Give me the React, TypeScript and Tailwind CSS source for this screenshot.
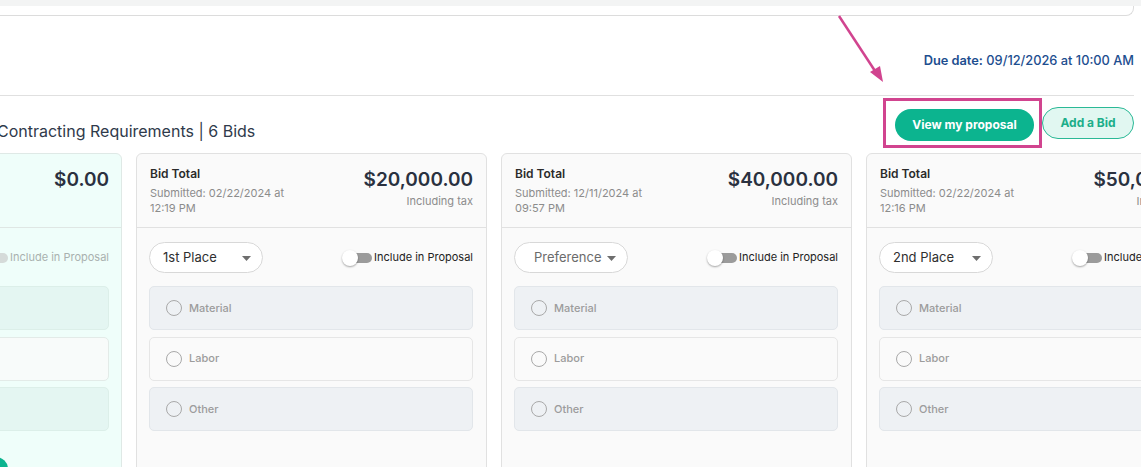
import React from "react";

type Bid = {
  amount: string;
  date: string;
  time: string;
  place: string;
  placeholder?: boolean;
  tax?: boolean;
};

const bids: Bid[] = [
  { amount: "$20,000.00", date: "02/22/2024", time: "12:19 PM", place: "1st Place", tax: true },
  { amount: "$40,000.00", date: "12/11/2024", time: "09:57 PM", place: "Preference", placeholder: true, tax: true },
  { amount: "$50,000.00", date: "02/22/2024", time: "12:16 PM", place: "2nd Place", tax: true },
];

const costTypes = ["Material", "Labor", "Other"];

function Toggle({ muted }: { muted?: boolean }) {
  return (
    <div className="relative w-[30px] h-[16px] shrink-0">
      <div className={`absolute left-[6px] top-[3px] w-[24px] h-[10px] rounded-full ${muted ? "bg-[#d5dbd9]" : "bg-[#9b9b9b]"}`} />
      <div
        className={`absolute left-0 top-0 w-[16px] h-[16px] rounded-full shadow-[0_1px_2px_rgba(0,0,0,0.35)] ${muted ? "bg-[#d8dcdb]" : "bg-white"}`}
      />
    </div>
  );
}

function CostRow({ label, shaded, mint }: { label: string; shaded: boolean; mint?: boolean }) {
  const bg = mint
    ? shaded
      ? "bg-[#e4f6f2] border-[#dcefe9]"
      : "bg-[#f8fbfa] border-[#e3ebe8]"
    : shaded
    ? "bg-[#eef1f4] border-[#e2e6ea]"
    : "bg-[#fafafa] border-[#e6e6e6]";
  return (
    <div className={`h-[44px] rounded-[5px] border ${bg} flex items-center pl-[16px] gap-[7px]`}>
      {!mint && (
        <>
          <span className="w-[16px] h-[16px] rounded-full border border-[#a9a9a9]" />
          <span className="text-[11px] font-medium text-[#9c9c9c]">{label}</span>
        </>
      )}
    </div>
  );
}

function PlaceSelect({ value, placeholder }: { value: string; placeholder?: boolean }) {
  return (
    <div className="relative w-[114px] h-[31px] rounded-full border border-[#d8d8d8] bg-white flex items-center">
      <span className={`text-[13px] ${placeholder ? "pl-[19px] text-[#6b6b6b]" : "pl-[13px] text-[#2f2f2f]"}`}>
        {value}
      </span>
      <svg className="absolute left-[92px] top-[13px]" width="9" height="5" viewBox="0 0 9 5">
        <path d="M0 0 L9 0 L4.5 5 Z" fill="#6e6e6e" />
      </svg>
    </div>
  );
}

function BidCard({ bid }: { bid: Bid }) {
  return (
    <div className="w-[351px] h-[330px] shrink-0 rounded-[6px] border border-[#e1e1e1] bg-[#fafafa] overflow-hidden">
      <div className="h-[74px] border-b border-[#e1e1e1] px-[13px] pt-[12px] flex justify-between">
        <div>
          <div className="text-[12px] leading-[16px] font-semibold text-[#2b2b2b]">Bid Total</div>
          <div className="mt-[4px] text-[11px] leading-[15px] text-[#8c8c8c]">
            Submitted: {bid.date} at
            <br />
            {bid.time}
          </div>
        </div>
        <div className="text-right whitespace-nowrap">
          <div className="text-[19px] leading-[28px] font-semibold text-[#2a3140]">{bid.amount}</div>
          {bid.tax && <div className="text-[11px] leading-[15px] text-[#8c8c8c]">Including tax</div>}
        </div>
      </div>
      <div className="pl-[12px] pr-[13px] pt-[14px]">
        <div className="flex items-center justify-between">
          <PlaceSelect value={bid.place} placeholder={bid.placeholder} />
          <div className="flex items-center gap-[2px] whitespace-nowrap">
            <Toggle />
            <span className="text-[11px] text-[#232323]">Include in Proposal</span>
          </div>
        </div>
        <div className="mt-[13px] flex flex-col gap-[6.5px]">
          {costTypes.map((c, i) => (
            <CostRow key={c} label={c} shaded={i !== 1} />
          ))}
        </div>
      </div>
    </div>
  );
}

function DraftCard() {
  return (
    <div className="w-[351px] h-[330px] shrink-0 rounded-[6px] border border-[#dfe9e6] bg-[#effefa] overflow-hidden">
      <div className="h-[74px] border-b border-[#dfe7e4] px-[12px] pt-[12px] flex justify-end">
        <div className="text-[19px] leading-[28px] font-semibold text-[#2a3140]">$0.00</div>
      </div>
      <div className="px-[12px] pt-[14px]">
        <div className="h-[31px] flex items-center justify-end">
          <div className="flex items-center gap-[2px] whitespace-nowrap">
            <Toggle muted />
            <span className="text-[11px] text-[#a9b1af]">Include in Proposal</span>
          </div>
        </div>
        <div className="mt-[13px] flex flex-col gap-[6.5px]">
          {costTypes.map((c, i) => (
            <CostRow key={c} label={c} shaded={i !== 1} mint />
          ))}
        </div>
      </div>
    </div>
  );
}

export default function App() {
  return (
    <div
      className="relative w-[1141px] h-[467px] overflow-hidden bg-white"
      style={{ fontFamily: "Inter, 'Noto Sans', sans-serif" }}
    >
      <div className="h-[6px] bg-[#f3f4f4]" />
      <div className="h-[10px] w-[1134px] border-b border-r border-[#dcdcdc] rounded-br-[8px]" />

      <div className="mt-[36px] w-[1134px] flex justify-end">
        <span className="text-[12.8px] leading-[18px] text-[#1d4e8f] font-medium">
          <span className="font-semibold">Due date:</span> 09/12/2026 at 10:00 AM
        </span>
      </div>

      <div className="mt-[25px] w-[1134px] border-b border-[#e0e0e0]" />

      <div className="mt-[2px] w-[1134px] h-[50px] flex items-center justify-between">
        <h2 className="-ml-[3px] pt-[16px] text-[16px] text-[#2f3a4b]">Contracting Requirements | 6 Bids</h2>
        <div className="flex items-center h-full">
          <div className="h-full border-[3px] border-[#d1448f] pt-[8px] pb-[4px] pl-[9px] pr-[5px]">
            <button className="h-[32px] w-[139px] rounded-full bg-[#0cb48f] text-white text-[12px] font-bold">
              View my proposal
            </button>
          </div>
          <button className="h-[32px] w-[92px] rounded-full border border-[#2ab996] bg-[#e1f7f1] text-[#1cae8a] text-[12px] font-bold">
            Add a Bid
          </button>
        </div>
      </div>

      <div className="mt-[5px] -ml-[229px] flex gap-[14px]">
        <DraftCard />
        {bids.map((b) => (
          <BidCard key={b.time + b.date} bid={b} />
        ))}
      </div>

      {/* floating action bubble peeking at the bottom-left */}
      <div className="absolute left-[-16px] top-[457px] w-[24px] h-[24px] rounded-full bg-[#0cb48f]" />

      {/* callout arrow */}
      <svg className="absolute left-0 top-0 pointer-events-none" width="1141" height="467">
        <line x1="839" y1="16" x2="877" y2="74" stroke="#d1448f" strokeWidth="2.5" />
        <path d="M883 82 L870 72 L880 66 Z" fill="#d1448f" />
      </svg>
    </div>
  );
}
